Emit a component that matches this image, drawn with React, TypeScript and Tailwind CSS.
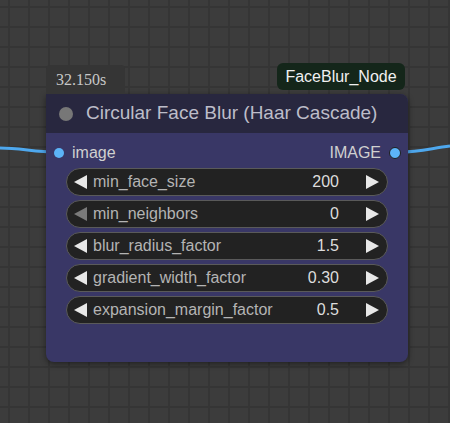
import { ReactNode } from "react";

type Widget = {
  name: string;
  value: string;
  atMin?: boolean;
};

const widgets: Widget[] = [
  { name: "min_face_size", value: "200" },
  { name: "min_neighbors", value: "0", atMin: true },
  { name: "blur_radius_factor", value: "1.5" },
  { name: "gradient_width_factor", value: "0.30" },
  { name: "expansion_margin_factor", value: "0.5" },
];

function Arrow({ dir, dim }: { dir: "left" | "right"; dim?: boolean }) {
  return (
    <svg width="13" height="14" viewBox="0 0 13 14" className="shrink-0">
      <polygon
        points={dir === "left" ? "13,0 13,14 0,7" : "0,0 0,14 13,7"}
        fill={dim ? "#7a7a7a" : "#e8e8e8"}
      />
    </svg>
  );
}

function NumberWidget({ name, value, atMin }: Widget) {
  return (
    <div className="flex h-[28px] items-center rounded-full border border-[#5a5a5a] bg-[#222222] pl-[7px] pr-[8px]">
      <Arrow dir="left" dim={atMin} />
      <span className="ml-[6px] flex-1 truncate text-[16px] text-[#b4b4b4]">
        {name}
      </span>
      <span className="mr-[27px] text-[16px] text-[#dddddd]">{value}</span>
      <Arrow dir="right" />
    </div>
  );
}

function Badge({ children, className }: { children: ReactNode; className: string }) {
  return <div className={className}>{children}</div>;
}

export default function App() {
  return (
    <div
      className="relative h-[423px] w-[450px] overflow-hidden bg-[#3c3c3c] bg-[linear-gradient(to_right,#353535_2px,transparent_2px),linear-gradient(to_bottom,#353535_2px,transparent_2px)] bg-[size:20px_20px] bg-[position:8px_6px]"
      style={{ fontFamily: '"Liberation Sans", Arial, sans-serif' }}
    >
      {/* links */}
      <svg className="absolute inset-0" width="450" height="423">
        <path d="M0 148 C 20 148, 35 152, 56 152" stroke="#4ea8ee" strokeWidth="3" fill="none" />
        <path d="M400 152 C 420 152, 432 148, 450 146" stroke="#4ea8ee" strokeWidth="3" fill="none" />
      </svg>

      <div className="absolute left-[46px] top-[63px] w-[362px]">
        <div className="flex items-end justify-between">
          <Badge className="flex h-[29px] w-[79px] items-center rounded-t-[4px] bg-[#353535] pl-[10px] text-[16px] text-[#c8c8c8] [font-family:'Liberation_Serif',serif]">
            32.150s
          </Badge>
          <Badge className="mb-[4px] mr-[3px] flex h-[27px] w-[128px] items-center justify-center rounded-[6px] bg-[#14261a] text-[16px] text-[#f0f0f0]">
            FaceBlur_Node
          </Badge>
        </div>

        <div className="overflow-hidden rounded-[8px] rounded-tl-none bg-[#393766] shadow-[0_2px_6px_rgba(0,0,0,0.45)]">
          <div className="flex h-[39px] items-center bg-[#28273f] pl-[13px]">
            <div className="h-[14px] w-[14px] rounded-full bg-[#777777]" />
            <span className="ml-[13px] text-[19px] text-[#bdbdc9]">
              Circular Face Blur (Haar Cascade)
            </span>
          </div>

          <div className="flex h-[35px] items-center justify-between pl-[8px] pr-[7px] pt-[5px]">
            <div className="flex items-center">
              <div className="h-[10px] w-[10px] rounded-full bg-[#5cb4f8]" />
              <span className="ml-[8px] text-[16px] text-[#d0d0d0]">image</span>
            </div>
            <div className="flex items-center">
              <span className="mr-[8px] text-[16px] text-[#d0d0d0]">IMAGE</span>
              <div className="h-[12px] w-[12px] rounded-full border-[1.5px] border-[#1e1e1e] bg-[#5cb4f8]" />
            </div>
          </div>

          <div className="flex flex-col gap-[4px] px-[20px] pb-[38px]">
            {widgets.map((w) => (
              <NumberWidget key={w.name} {...w} />
            ))}
          </div>
        </div>
      </div>
    </div>
  );
}
